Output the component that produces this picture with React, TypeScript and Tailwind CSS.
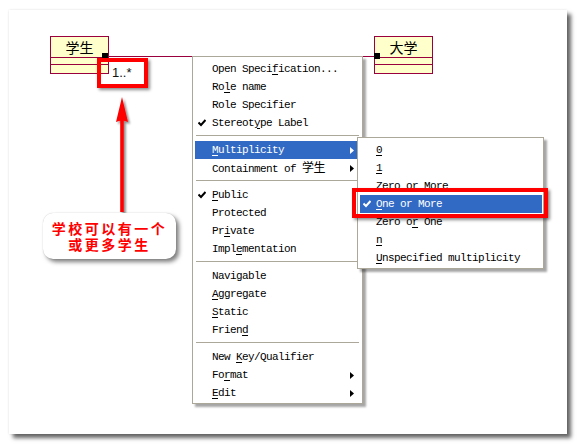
import React from "react";

const mono = { fontFamily: '"Liberation Mono", "Noto Sans CJK SC", monospace' };

function Check({ white }: { white?: boolean }) {
  return (
    <svg width="8" height="8" viewBox="0 0 8 8" className="absolute left-[3px] top-[5px]">
      <path d="M0.5 3.5 L3 6 L7.5 1" fill="none" stroke={white ? "#fff" : "#000"} strokeWidth="2" />
    </svg>
  );
}

function Arrow({ white }: { white?: boolean }) {
  return (
    <svg width="4" height="7" viewBox="0 0 4 7" className="absolute right-[3px] top-[6px]">
      <path d="M0 0 L4 3.5 L0 7 Z" fill={white ? "#fff" : "#000"} />
    </svg>
  );
}

type Item = { label: React.ReactNode; check?: boolean; sub?: boolean; hi?: boolean };

function MenuItem({ it, pl }: { it: Item; pl: string }) {
  return (
    <div
      className={`relative h-[18px] flex items-center whitespace-nowrap ${pl} ${
        it.hi ? "bg-[#316ac5] text-white" : "text-black"
      }`}
    >
      {it.check && <Check white={it.hi} />}
      <span>{it.label}</span>
      {it.sub && <Arrow white={it.hi} />}
    </div>
  );
}

function Sep() {
  return <div className="h-[9px] pt-[3px] ml-[1px] -mr-[2px]"><div className="h-px bg-[#aca899]" /></div>;
}

const U = ({ children }: { children: React.ReactNode }) => (
  <span className="underline underline-offset-[2px] decoration-1">{children}</span>
);

export default function App() {
  const g1: Item[] = [
    { label: <>Open Speci<U>f</U>ication...</> },
    { label: <>Ro<U>l</U>e name</> },
    { label: <>Role Specifier</> },
    { label: <>Stereot<U>y</U>pe Label</>, check: true },
  ];
  const g2: Item[] = [
    { label: <><U>M</U>ultiplicity</>, sub: true, hi: true },
    { label: <>Containment of <span className="text-[12px]" style={{ fontFamily: '"Noto Sans CJK SC", sans-serif' }}>学生</span></>, sub: true },
  ];
  const g3: Item[] = [
    { label: <><U>P</U>ublic</>, check: true },
    { label: <>Protected</> },
    { label: <>Pr<U>i</U>vate</> },
    { label: <>Impl<U>e</U>mentation</> },
  ];
  const g4: Item[] = [
    { label: <>Navigable</> },
    { label: <><U>A</U>ggregate</> },
    { label: <><U>S</U>tatic</> },
    { label: <>Frien<U>d</U></> },
  ];
  const g5: Item[] = [
    { label: <>New <U>K</U>ey/Qualifier</> },
    { label: <>Fo<U>r</U>mat</>, sub: true },
    { label: <><U>E</U>dit</>, sub: true },
  ];
  const subItems: Item[] = [
    { label: <U>0</U> },
    { label: <U>1</U> },
    { label: <>Zero or More</> },
    { label: <><U>O</U>ne or More</>, check: true, hi: true },
    { label: <>Zero o<U>r</U> One</> },
    { label: <U>n</U> },
    { label: <><U>U</U>nspecified multiplicity</> },
  ];

  const cjk = { fontFamily: '"Noto Sans CJK SC", sans-serif' };

  return (
    <div className="w-[578px] h-[445px] bg-white pl-[9px] pt-[10px]">
      <div className="relative w-[558px] h-[424px] bg-white shadow-[4px_4px_4px_rgba(0,0,0,0.6),0_0_2px_rgba(0,0,0,0.12)]">
        {/* association line */}
        <div className="absolute left-[99px] top-[46px] w-[267px] h-px bg-[#99003d]" />

        {/* class 学生 */}
        <div className="absolute left-[41px] top-[26px] w-[59px] border border-[#99003d] bg-[#ffffcc]">
          <div className="h-[20px] flex items-center justify-center text-[14px] text-black" style={cjk}>学生</div>
          <div className="h-[7px] border-t border-[#99003d]" />
          <div className="h-[9px] border-t border-[#99003d]" />
        </div>
        <div className="absolute left-[93px] top-[43px] w-[6px] h-[6px] bg-black" />

        {/* class 大学 */}
        <div className="absolute left-[365px] top-[26px] w-[59px] border border-[#99003d] bg-[#ffffcc]">
          <div className="h-[20px] flex items-center justify-center text-[14px] text-black" style={cjk}>大学</div>
          <div className="h-[7px] border-t border-[#99003d]" />
          <div className="h-[9px] border-t border-[#99003d]" />
        </div>
        <div className="absolute left-[365px] top-[43px] w-[6px] h-[6px] bg-black" />

        {/* multiplicity label */}
        <div className="absolute left-[103px] top-[55px] text-[13px] leading-[16px] text-[#111]" style={{ fontFamily: '"Liberation Sans", Arial, sans-serif' }}>
          1..*
        </div>
        <div className="absolute left-[88px] top-[48px] w-[51px] h-[30px] border-4 border-[#ff0000] shadow-[2px_2px_3px_rgba(0,0,0,0.45)]" />

        {/* arrow */}
        <svg className="absolute left-[101px] top-[84px]" width="26" height="124" viewBox="0 0 26 124">
          <defs>
            <filter id="ds" x="-50%" y="-10%" width="200%" height="130%">
              <feDropShadow dx="2" dy="2" stdDeviation="1.2" floodColor="#000" floodOpacity="0.45" />
            </filter>
          </defs>
          <g filter="url(#ds)" fill="#ff0000">
            <path d="M12 3 L18 28 Q12 25 6 28 Z" />
            <rect x="10.2" y="25" width="3.6" height="93" />
          </g>
        </svg>

        {/* callout */}
        <div
          className="absolute left-[34px] top-[203px] w-[133px] h-[46px] rounded-[10px] bg-white shadow-[3px_3px_4px_rgba(0,0,0,0.5),0_0_1px_rgba(0,0,0,0.25)] flex flex-col items-center justify-center text-[#ff0000] font-bold text-[14px] leading-[16px] tracking-[2.5px]"
          style={cjk}
        >
          <div className="leading-[16px]">学校可以有一个</div>
          <div className="leading-[16px]">或更多学生</div>
        </div>

        {/* main context menu */}
        <div
          className="absolute left-[183px] top-[46px] w-[171px] border border-[#aca899] bg-white pl-[2px] pr-[5px] pt-[3px] pb-[1px] text-[11px] tracking-[-0.6px] shadow-[3px_3px_2px_rgba(0,0,0,0.35)]"
          style={mono}
        >
          {g1.map((it, i) => <MenuItem key={"a" + i} it={it} pl="pl-[17px]" />)}
          <Sep />
          {g2.map((it, i) => <MenuItem key={"b" + i} it={it} pl="pl-[17px]" />)}
          <Sep />
          {g3.map((it, i) => <MenuItem key={"c" + i} it={it} pl="pl-[17px]" />)}
          <Sep />
          {g4.map((it, i) => <MenuItem key={"d" + i} it={it} pl="pl-[17px]" />)}
          <Sep />
          {g5.map((it, i) => <MenuItem key={"e" + i} it={it} pl="pl-[17px]" />)}
        </div>

        {/* submenu */}
        <div
          className="absolute left-[348px] top-[127px] w-[187px] border border-[#aca899] bg-white pl-[2px] pr-[1px] pt-[3px] pb-[1px] text-[11px] tracking-[-0.6px] shadow-[3px_3px_2px_rgba(0,0,0,0.35)]"
          style={mono}
        >
          {subItems.map((it, i) => <MenuItem key={"s" + i} it={it} pl="pl-[16px]" />)}
        </div>
        <div className="absolute left-[343px] top-[178px] w-[196px] h-[30px] border-4 border-[#ff0000] shadow-[2px_2px_3px_rgba(0,0,0,0.45)]" />
      </div>
    </div>
  );
}
